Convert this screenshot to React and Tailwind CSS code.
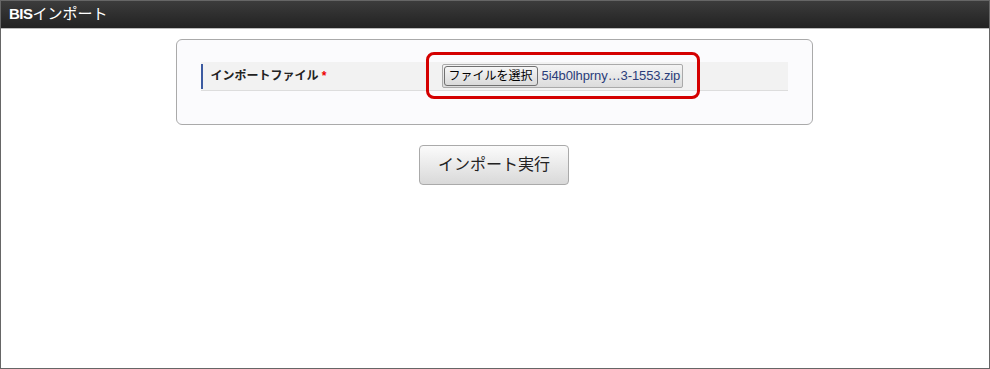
export default function App() {
  return (
    <div className="w-[990px] h-[369px] border border-[#666] bg-white flex flex-col" style={{ fontFamily: '"Liberation Sans", Arial, "Noto Sans CJK JP", sans-serif' }}>
      <div className="h-[28px] shrink-0 bg-gradient-to-b from-[#3c3c3c] to-[#222] border-b border-[#bbb] flex items-center px-[8px]">
        <span className="text-white text-[15px] font-bold tracking-[-0.5px]">BIS</span>
        <span className="text-white text-[15px]">インポート</span>
      </div>

      <div className="flex flex-col items-center pt-[10px] pr-[2px]">
        <div className="w-[637px] h-[86px] border border-[#aaa] rounded-[6px] bg-[#fbfbfd] px-[24px] pt-[22px]">
          <div className="h-[29px] bg-[#f2f2f2] border-b border-[#ddd] flex items-center">
            <div className="w-[2px] h-[25px] bg-[#3b5aa0] self-end mb-[1px]"></div>
            <div className="w-[239px] pl-[8px] text-[12px] font-bold text-[#222]">
              インポートファイル <span className="text-[#e00] font-bold">*</span>
            </div>
            <div className="relative">
              <div className="absolute left-[-16px] top-[-12px] w-[274px] h-[47px] border-[3px] border-[#d40000] rounded-[8px]"></div>
              <div className="flex items-center h-[24px] w-[241px] border border-[#aaa] rounded-[2px] bg-gradient-to-b from-[#f4f4f4] to-[#dcdcdc] px-[1px]">
                <div className="h-[20px] px-[4px] border border-[#707070] rounded-[3px] bg-gradient-to-b from-[#f6f6f6] to-[#dadada] text-[12px] leading-[18px] text-black">ファイルを選択</div>
                <span className="ml-[4px] text-[13px] text-[#2a3c7a] tracking-[-0.1px]">5i4b0lhprny…3-1553.zip</span>
              </div>
            </div>
          </div>
        </div>

        <button className="mt-[20px] w-[150px] h-[40px] border border-[#aaa] rounded-[4px] bg-gradient-to-b from-[#fbfbfb] to-[#d9d9d9] text-[16px] text-[#222]">
          インポート実行
        </button>
      </div>
    </div>
  );
}
